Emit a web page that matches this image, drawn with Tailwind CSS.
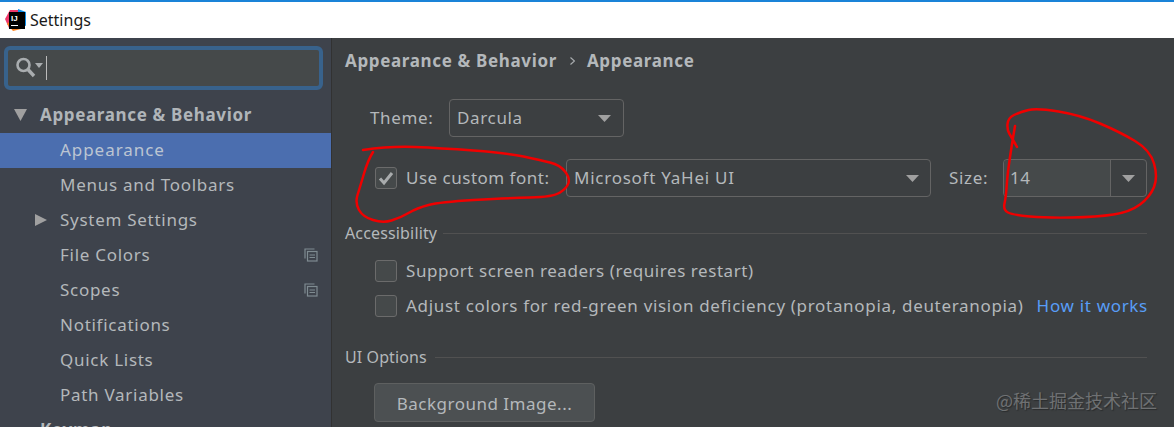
<!DOCTYPE html>
<html lang="en">
<head>
    <meta charset="UTF-8">
    <title>Settings</title>
    <script src="https://cdn.jsdelivr.net/npm/@tailwindcss/browser@4"></script>
</head>
<body class="overflow-hidden bg-[#3c3f41] font-['Noto_Sans',sans-serif] text-[17px] leading-[24px] tracking-[0.65px] text-[#b4b8bb]">
<div class="relative flex h-[427px] w-[1174px] flex-col overflow-hidden">

    <!-- Title bar -->
    <header class="flex h-[38px] shrink-0 items-center gap-[4px] border-t-2 border-[#1a83d8] bg-white pl-[5px] text-[16px] tracking-normal text-[#1a1a1a]">
        <svg width="21" height="22" viewBox="0 0 21 22">
            <path d="M0 10 L5 1 L13 1 L13 14 L4 19 Z" fill="#f0386b"/>
            <path d="M13 0 L21 3 L21 17 L13 14 Z" fill="#0d8ee9"/>
            <path d="M2 15 L8 22 L16 20 L6 11 Z" fill="#fc801d"/>
            <rect x="4" y="3" width="16" height="17" fill="#000"/>
            <rect x="6" y="16" width="7" height="1" fill="#fff"/>
            <text x="6" y="12" font-size="8" font-weight="700" fill="#fff" font-family="Liberation Sans">IJ</text>
        </svg>
        <span>Settings</span>
    </header>

    <div class="flex min-h-0 flex-1">
        <!-- Sidebar -->
        <aside class="w-[332px] shrink-0 border-r border-[#323232] bg-[#3e434c]">
            <div class="pl-[4px] pt-[8px]">
                <div class="flex h-[44px] w-[319px] items-center rounded-[6px] border-[4px] border-[#38628c] bg-[#45494a] pl-[8px]">
                    <svg width="27" height="24" viewBox="0 0 27 24" fill="none">
                        <circle cx="7.5" cy="9" r="6" stroke="#a9adaf" stroke-width="2.6"/>
                        <path d="M12 13.5 L18 20" stroke="#a9adaf" stroke-width="3.4"/>
                        <path d="M19 7 H27 L23 12 Z" fill="#a9adaf"/>
                    </svg>
                    <span class="ml-[3px] h-[24px] w-px bg-[#bbbbbb]"></span>
                </div>
            </div>
            <nav class="mt-[8px] tracking-[0.72px]">
                <div class="flex h-[35px] items-center pb-[2px] pl-[14px] font-bold tracking-[0.65px] text-[#b0b5b9]">
                    <svg width="13" height="12" viewBox="0 0 13 12"><path d="M0 0 H13 L6.5 12 Z" fill="#a0a0a0"/></svg>
                    <span class="ml-[13px]">Appearance &amp; Behavior</span>
                </div>
                <div class="flex h-[35px] items-center bg-[#4b6eaf] pb-[2px] pl-[60px] tracking-[0.95px] text-[#bcc5d2]">Appearance</div>
                <div class="flex h-[35px] items-center pb-[2px] pl-[60px]">Menus and Toolbars</div>
                <div class="flex h-[35px] items-center pb-[2px] pl-[35px]">
                    <svg width="12" height="12" viewBox="0 0 12 12"><path d="M0 0 L12 6 L0 12 Z" fill="#a0a0a0"/></svg>
                    <span class="ml-[13px]">System Settings</span>
                </div>
                <div class="flex h-[35px] items-center justify-between pb-[2px] pl-[60px] pr-[13px]">
                    <span>File Colors</span>
                    <svg width="14" height="14" viewBox="0 0 14 14" fill="none" stroke="#7f8b91" stroke-width="1.2"><path d="M10.5 1 H1 V10.5"/><rect x="3.5" y="3.5" width="9.5" height="9.5"/><path d="M5.5 7 H11 M5.5 9.5 H11"/></svg>
                </div>
                <div class="flex h-[35px] items-center justify-between pb-[2px] pl-[60px] pr-[13px]">
                    <span>Scopes</span>
                    <svg width="14" height="14" viewBox="0 0 14 14" fill="none" stroke="#7f8b91" stroke-width="1.2"><path d="M10.5 1 H1 V10.5"/><rect x="3.5" y="3.5" width="9.5" height="9.5"/><path d="M5.5 7 H11 M5.5 9.5 H11"/></svg>
                </div>
                <div class="flex h-[35px] items-center pb-[2px] pl-[60px]">Notifications</div>
                <div class="flex h-[35px] items-center pb-[2px] pl-[60px]">Quick Lists</div>
                <div class="flex h-[35px] items-center pb-[2px] pl-[60px]">Path Variables</div>
                <div class="flex h-[35px] items-center pb-[2px] pl-[40px] font-bold">Keymap</div>
            </nav>
        </aside>

        <!-- Main panel -->
        <main class="min-w-0 flex-1 whitespace-nowrap pl-[13px] pr-[27px]">
            <div class="flex h-[46px] items-center font-bold">
                <span>Appearance &amp; Behavior</span>
                <svg class="ml-[13px] mr-[12px]" width="5" height="8" viewBox="0 0 5 8" fill="none" stroke="#a9adaf" stroke-width="1.2"><path d="M0.5 0.5 L4.5 4 L0.5 7.5"/></svg>
                <span>Appearance</span>
            </div>

            <div class="mt-[15px] flex items-center pl-[25px]">
                <span class="w-[79px]">Theme:</span>
                <div class="flex h-[38px] w-[175px] items-center justify-between rounded-[4px] border border-[#646464] pl-[7px] pr-[12px]">
                    <span>Darcula</span>
                    <svg width="13" height="7" viewBox="0 0 13 7"><path d="M0 0 H13 L6.5 7 Z" fill="#a0a0a0"/></svg>
                </div>
            </div>

            <div class="mt-[22px] flex items-center pl-[30px]">
                <span class="flex h-[22px] w-[22px] items-center justify-center rounded-[3px] border border-[#6b6b6b] bg-[#45494a]">
                    <svg width="16" height="15" viewBox="0 0 16 15" fill="none"><path d="M2 7.5 L6 12 L14 2" stroke="#a9acad" stroke-width="3"/></svg>
                </span>
                <span class="ml-[9px] w-[160px] tracking-[0.5px]">Use custom font:</span>
                <div class="flex h-[38px] w-[365px] items-center justify-between rounded-[4px] border border-[#646464] pl-[7px] pr-[11px]">
                    <span class="tracking-[0.75px]">Microsoft YaHei UI</span>
                    <svg width="13" height="7" viewBox="0 0 13 7"><path d="M0 0 H13 L6.5 7 Z" fill="#a0a0a0"/></svg>
                </div>
                <span class="ml-[18px] w-[54px]">Size:</span>
                <div class="flex h-[38px] w-[144px] items-stretch rounded-[4px] border border-[#646464]">
                    <span class="flex flex-1 items-center rounded-l-[4px] bg-[#45494a] pl-[6px]">14</span>
                    <span class="flex w-[36px] items-center justify-center border-l border-[#646464]">
                        <svg width="13" height="7" viewBox="0 0 13 7"><path d="M0 0 H13 L6.5 7 Z" fill="#a0a0a0"/></svg>
                    </span>
                </div>
            </div>

            <div class="mt-[24px] flex h-[24px] items-center gap-[6px] text-[16px] tracking-[0.15px]">
                <span>Accessibility</span>
                <span class="h-px flex-1 bg-[#515151]"></span>
            </div>
            <div class="mt-[14px] flex h-[24px] items-center pl-[30px]">
                <span class="h-[22px] w-[22px] rounded-[3px] border border-[#6b6b6b] bg-[#45494a]"></span>
                <span class="ml-[9px] tracking-[0.55px]">Support screen readers (requires restart)</span>
            </div>
            <div class="mt-[11px] flex h-[24px] items-center pl-[30px]">
                <span class="h-[22px] w-[22px] shrink-0 rounded-[3px] border border-[#6b6b6b] bg-[#45494a]"></span>
                <span class="ml-[9px] tracking-[0.68px]">Adjust colors for red-green vision deficiency (protanopia, deuteranopia)</span>
                <span class="ml-[13px] tracking-[0.68px] text-[#589df6]">How it works</span>
            </div>

            <div class="mt-[27px] flex h-[24px] items-center gap-[8px] text-[16px] tracking-[0.1px]">
                <span>UI Options</span>
                <span class="h-px flex-1 bg-[#515151]"></span>
            </div>
            <div class="mt-[14px] pl-[29px]">
                <button class="h-[39px] w-[221px] rounded-[4px] border border-[#5e6060] bg-[#4c5052] pt-[3px] tracking-[0.5px] text-[#b4b8bb]">Background Image...</button>
            </div>
        </main>
    </div>

    <!-- Hand-drawn red annotations on top of the screenshot -->
    <svg class="pointer-events-none absolute left-0 top-0" width="1174" height="427" fill="none" stroke="#f00000" stroke-width="2.5" stroke-linecap="round" stroke-linejoin="round">
        <path d="M363 150 Q390 146 415 147 Q440 148 473.5 150.5 Q507 153 523.5 156.5 Q540 160 550 162.5 Q560 165 565 171.5 Q570 178 568.5 183 Q567 188 560 192.5 Q553 197 530 197.5 Q507 198 473.5 200 Q440 202 428.5 205 Q417 208 408.5 213 Q400 218 391.5 220.5 Q383 223 373 220 Q363 217 359 210 Q355 203 357.5 195 Q360 187 364 173.5 Q368 160 373 152"/>
        <path d="M1015 126 Q1008 167 1007 182 Q1006 197 1004.5 203.5 Q1003 210 1008 212.5 Q1013 215 1030 216.5 Q1047 218 1072 217.5 Q1097 217 1113.5 214.5 Q1130 212 1140 204.5 Q1150 197 1154 187 Q1158 177 1154 163.5 Q1150 150 1135 141 Q1120 132 1100 123.5 Q1080 115 1058.5 111.5 Q1037 108 1028.5 110 Q1020 112 1014 115 Q1008 118 1007.5 124 Q1007 130 1009.5 134 Q1012 138 1017 147"/>
    </svg>

    <!-- Watermark -->
    <span class="absolute left-[996px] top-[388px] font-['Noto_Sans_CJK_SC',sans-serif] text-[18px] tracking-normal text-[#6f7173] [text-shadow:1px_1px_1px_#2a2c2d]">@稀土掘金技术社区</span>
</div>
</body>
</html>
